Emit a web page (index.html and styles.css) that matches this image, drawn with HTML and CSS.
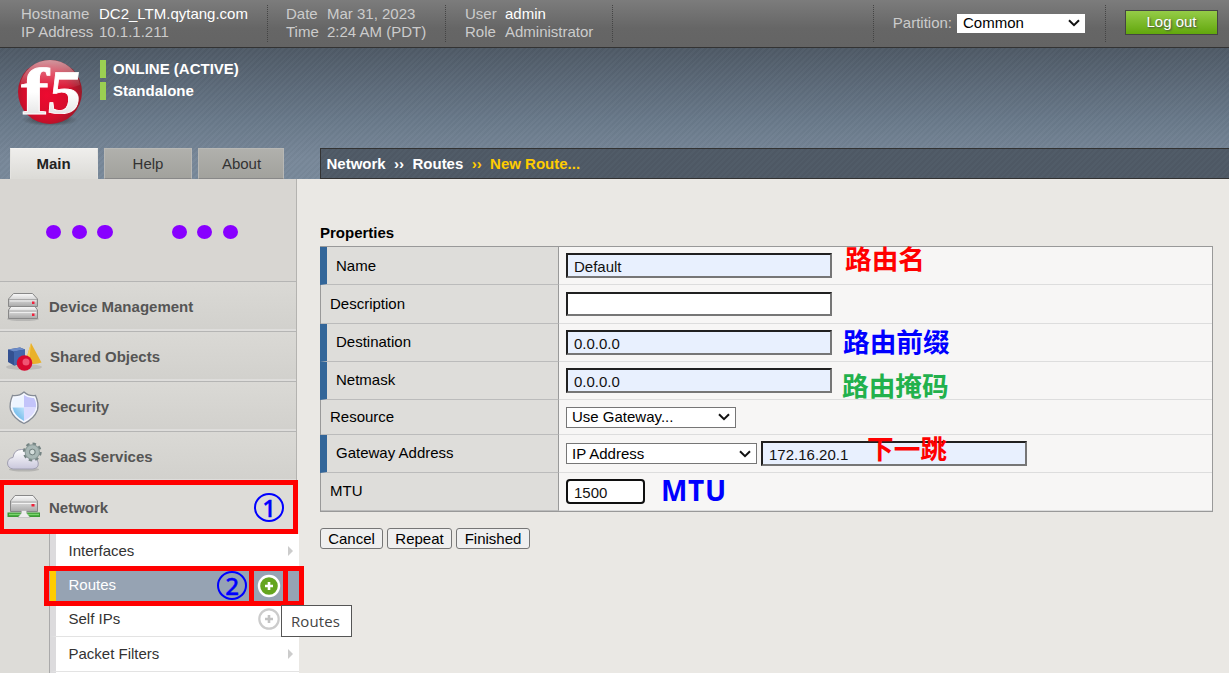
FILE: index.html
```html
<!DOCTYPE html>
<html lang="en">
<head>
<meta charset="utf-8">
<title>New Route</title>
<link rel="stylesheet" href="styles.css">
</head>
<body>
<div class="page">
  <header class="topbar">
    <dl class="info info-host"><dt>Hostname</dt><dd class="hi">DC2_LTM.qytang.com</dd><dt>IP Address</dt><dd>10.1.1.211</dd></dl>
    <dl class="info info-date"><dt>Date</dt><dd>Mar 31, 2023</dd><dt>Time</dt><dd>2:24 AM (PDT)</dd></dl>
    <dl class="info info-user"><dt>User</dt><dd class="hi">admin</dd><dt>Role</dt><dd>Administrator</dd></dl>
    <div class="partition"><span>Partition:</span>
      <div class="select select-common"><span>Common</span><svg viewBox="0 0 12 8"><path d="M1 1.2 6 6.2 11 1.2"/></svg></div>
    </div>
    <div class="logout-wrap"><button class="logout">Log out</button></div>
  </header>

  <section class="banner">
    <div class="brand">
      <svg class="logo" viewBox="0 0 72 72">
        <defs>
          <radialGradient id="ball" cx=".45" cy=".55" r=".6"><stop offset="0" stop-color="#ed0a30"/><stop offset=".6" stop-color="#d50d2b"/><stop offset="1" stop-color="#8a1b27"/></radialGradient>
          <linearGradient id="gloss" x2="0" y2="1"><stop offset="0" stop-color="#fff" stop-opacity=".55"/><stop offset="1" stop-color="#fff" stop-opacity="0"/></linearGradient>
          <linearGradient id="letter" x2="0" y2="1"><stop offset=".5" stop-color="#fff"/><stop offset="1" stop-color="#d8d8d8"/></linearGradient>
          <radialGradient id="shade"><stop offset="0" stop-color="#222" stop-opacity=".8"/><stop offset="1" stop-color="#222" stop-opacity="0"/></radialGradient>
        </defs>
        <ellipse cx="36" cy="62" rx="28" ry="6" fill="url(#shade)"/>
        <circle cx="36" cy="34" r="32" fill="url(#ball)"/>
        <path d="M6 27A30.500 30.500 0 0 1 66 27Q36 38 6 27z" fill="url(#gloss)"/>
        <text class="logo-f" x="7" y="56" textLength="28" lengthAdjust="spacingAndGlyphs">f</text>
        <text class="logo-5" transform="translate(32 55) skewX(-7)" x="0" y="0" textLength="33" lengthAdjust="spacingAndGlyphs">5</text>
      </svg>
      <div class="status"><p>ONLINE (ACTIVE)</p><p>Standalone</p></div>
    </div>
    <div class="navrow">
      <nav class="tabs"><a class="tab active">Main</a><a class="tab">Help</a><a class="tab about">About</a></nav>
      <div class="crumbs"><span>Network</span><span>››</span><span>Routes</span><span class="cur">››</span><span class="cur">New Route...</span></div>
    </div>
  </section>

  <div class="body">
    <aside class="side">
      <div class="blank">
        <div class="dots"><i></i><i></i><i></i></div>
        <div class="dots"><i></i><i></i><i></i></div>
      </div>
      <div class="item">
        <svg class="ico" viewBox="0 0 40 40">
          <defs><linearGradient id="metal" x2="0" y2="1"><stop offset="0" stop-color="#fafafa"/><stop offset="1" stop-color="#a9a9a9"/></linearGradient></defs>
          <ellipse cx="20" cy="33" rx="16" ry="2" fill="#999" opacity=".5"/>
          <path d="M5.500 24 8 20.500H32L34.500 24V32.500H5.500V24z" fill="url(#metal)" stroke="#888"/>
          <path d="M5.500 13 10.500 7.500H29.500L34.500 13V20.500H5.500z" fill="url(#metal)" stroke="#888"/>
          <path d="M6 13.500H34M6 25H34" stroke="#aaa"/><path d="M7 15H33M7 26.500H33" stroke="#eee"/>
          <rect x="29" y="15.500" width="2.500" height="2.500" fill="#f0203c"/><rect x="29" y="27.500" width="2.500" height="2.500" fill="#f0203c"/>
        </svg><span>Device Management</span></div>
      <div class="item">
        <svg class="ico" viewBox="0 0 40 40">
          <ellipse cx="21" cy="31" rx="18" ry="3" fill="#999" opacity=".4"/>
          <path d="M28 7 38.500 26.500Q33 29 22 27z" fill="#e9b12b"/><path d="M28 7 22 27 26 27z" fill="#f6cf59"/>
          <path d="M5 13.500 17 11.500 22 13.500V27L11 29.500 5 26z" fill="#345191"/><path d="M5 13.500 17 11.500 22 13.500 11 15.500z" fill="#6c8bc7"/><path d="M11 15.500 22 13.500V27L11 29.500z" fill="#4367ac"/>
          <circle cx="21.500" cy="27" r="7.800" fill="#d80a30"/><circle cx="23" cy="26" r="3.500" fill="#f05573"/>
        </svg><span class="n1">Shared Objects</span></div>
      <div class="item">
        <svg class="ico" viewBox="0 0 40 40">
          <defs><linearGradient id="aqua" x1="0" y1="1" x2="1" y2="0"><stop offset="0" stop-color="#4fa9e4"/><stop offset="1" stop-color="#bfe2fa"/></linearGradient></defs>
          <path d="M21 6Q16 10.500 9.500 9.500 6 18 7.500 24 11 33 21 37.500 31 33 34.500 24 36 17 32.500 9.500 26 10.500 21 6z" fill="#f5f8ff" stroke="#858b95" stroke-width="1.300"/>
          <path d="M21 9V21.500H9.500Q8.500 16 11 12 16.500 12.500 21 9z" fill="#edf4ff"/><path d="M21 9V21.500H33Q33.500 16 31 12 25.500 12.500 21 9z" fill="#c3c4fa"/>
          <path d="M9.500 21.500H21V35Q11.500 30 9.500 21.500z" fill="url(#aqua)"/><path d="M33 21.500H21V35Q31 30 33 21.500z" fill="#dcdcff"/>
        </svg><span class="n1">Security</span></div>
      <div class="item">
        <svg class="ico" viewBox="0 0 40 40">
          <defs><linearGradient id="cl" x2="0" y2="1"><stop offset="0" stop-color="#fff"/><stop offset="1" stop-color="#c9c7dc"/></linearGradient></defs>
          <ellipse cx="21" cy="33.500" rx="15" ry="2" fill="#888" opacity=".4"/>
          <path d="M10 33Q4.500 32 4.500 27 5 22 10 21.500 11 13.500 18.500 13.500 25 13.500 27 18 33 17.500 34 23 38 32 30 33z" fill="url(#cl)" stroke="#a09fb0"/>
          <circle cx="29.300" cy="16" r="8.200" fill="none" stroke="#748382" stroke-width="2.400" stroke-dasharray="3.440 3"/>
          <circle cx="29.300" cy="16" r="5.200" fill="none" stroke="#8a9a98" stroke-width="5"/><circle cx="29.300" cy="16" r="5" fill="none" stroke="#a9b8b6" stroke-width="3.400"/><circle cx="29.300" cy="16" r="2.800" fill="#d5dfdd" stroke="#748382"/>
        </svg><span class="n1">SaaS Services</span></div>
      <div class="item network">
        <svg class="ico" viewBox="0 0 40 40">
          <path d="M7.500 14 12 8.500H30L34.500 14V24.500H7.500z" fill="url(#metal)" stroke="#888"/><path d="M8 15H34.500" stroke="#aaa"/><path d="M9 16.500H33" stroke="#f2f2f2"/><rect x="28.500" y="17" width="3" height="2.500" fill="#ee1f37"/>
          <rect x="4.500" y="25.500" width="32.500" height="4.500" fill="#3b9b34"/><path d="M6 27.500H36" stroke="#79d66b" stroke-width="1.500"/><path d="M18.500 23.500H23.500V26L27 30.500H15L18.500 26z" fill="#eee" stroke="#aaa" stroke-width=".5"/>
        </svg><span>Network</span></div>
      <div class="submenu">
        <div class="sub first"><span>Interfaces</span><b class="arrow"></b></div>
        <div class="sub selected"><span>Routes</span>
          <svg class="plus" viewBox="0 0 24 24"><circle cx="12" cy="12" r="10" fill="#64a51e" stroke="#fff" stroke-width="2.400"/><path d="M12 8V16M8 12H16" stroke="#fff" stroke-width="2.600"/></svg></div>
        <div class="sub"><span>Self IPs</span>
          <svg class="plus" viewBox="0 0 24 24"><circle cx="12" cy="12" r="9.700" fill="#fff" stroke="#ccc" stroke-width="2.200"/><path d="M12 8V16M8 12H16" stroke="#c2c2c2" stroke-width="2.600"/></svg></div>
        <div class="sub"><span>Packet Filters</span><b class="arrow"></b></div>
        <div class="sub rest"></div>
      </div>
    </aside>

    <main class="content">
      <h1>Properties</h1>
      <div class="props">
        <div class="row r38"><label class="req">Name</label><div class="field"><input class="wide fill" value="Default"></div></div>
        <div class="row r39"><label>Description</label><div class="field"><input class="wide desc" value=""></div></div>
        <div class="row r38 up"><label class="req">Destination</label><div class="field"><input class="wide fill" value="0.0.0.0"></div></div>
        <div class="row r38 up"><label class="req">Netmask</label><div class="field"><input class="wide fill" value="0.0.0.0"></div></div>
        <div class="row r35"><label>Resource</label><div class="field"><div class="select s170"><span>Use Gateway...</span><svg viewBox="0 0 12 8"><path d="M1 1.2 6 6.2 11 1.2"/></svg></div></div></div>
        <div class="row r38 up"><label class="req">Gateway Address</label><div class="field"><div class="select s191"><span>IP Address</span><svg viewBox="0 0 12 8"><path d="M1 1.2 6 6.2 11 1.2"/></svg></div><input class="wide fill" value="172.16.20.1"></div></div>
        <div class="row r38 up"><label>MTU</label><div class="field"><input class="mtu" value="1500"></div></div>
      </div>
      <div class="actions"><button class="w63">Cancel</button><button class="w65">Repeat</button><button class="w74">Finished</button></div>
    </main>
  </div>

  <div class="box box-network"></div>
  <div class="box box-routes"></div>
  <div class="box box-plus"></div>
  <div class="num num-1">1</div>
  <div class="num num-2">2</div>
  <div class="tip">Routes</div>
  <div class="note note-name">路由名</div>
  <div class="note note-prefix">路由前缀</div>
  <div class="note note-mask">路由掩码</div>
  <div class="note note-hop">下一跳</div>
  <div class="note note-mtu">MTU</div>
</div>
</body>
</html>
```
FILE: styles.css
```css
* { box-sizing: border-box; }
body { margin: 0; font: 15px/18px "Liberation Sans", Arial, sans-serif; color: #000; }
.page { position: relative; width: 1229px; height: 673px; overflow: hidden; background: #eae8e4; }
p, dl, dd, h1 { margin: 0; }

/* top bar */
.topbar { display: flex; height: 48px; padding-top: 5px; color: #ccc; background: linear-gradient(#7c7c7c, #666 60%, #646464); border-bottom: 1px solid #333; }
.info { display: grid; align-content: start; height: 37px; white-space: nowrap; border-right: 1px dotted #444; }
.info-host { width: 268px; padding-left: 21px; grid-template-columns: 78px 1fr; }
.info-date { width: 178px; padding-left: 18px; grid-template-columns: 41px 1fr; }
.info-user { width: 167px; padding-left: 19px; grid-template-columns: 40px 1fr; }
.hi { color: #fff; }
.partition { display: flex; align-items: center; gap: 5px; height: 37px; margin-left: auto; padding: 0 20px 1px 19px; border-left: 1px dotted #444; border-right: 1px dotted #444; }
.logout-wrap { width: 123px; padding: 5px 0 0 19px; }
.logout { width: 93px; height: 25px; padding: 0 0 2px; font: inherit; color: #fff; text-shadow: 1px 1px 2px #444; background: linear-gradient(#95cc47, #62a70d); border: 1px solid #444; }

.select { display: flex; align-items: center; justify-content: space-between; height: 21px; padding: 0 5px 0 5px; color: #000; background: #fff; border: 1px solid #767676; }
.select svg { width: 12px; height: 8px; fill: none; stroke: #111; stroke-width: 2; }
.select-common { width: 128px; height: 19px; border: 0; padding-left: 6px; }
.s170 { width: 170px; }
.s191 { width: 191px; }

/* banner */
.banner { display: flex; flex-direction: column; justify-content: space-between; height: 131px;
  background: repeating-linear-gradient(135deg, rgba(255,255,255,.02) 0 2px, rgba(0,0,0,.02) 2px 4px), linear-gradient(#4f5a66, #69798a 55%, #788899 85%, #78899a); }
.brand { display: flex; height: 80px; padding-left: 14px; }
.logo { width: 72px; height: 72px; margin-top: 10px; overflow: visible; }
.logo text { font-family: "Liberation Serif", serif; font-weight: bold; fill: url(#letter); stroke: #fff; stroke-width: .8px; }
.logo-f { font-size: 65px; }
.logo-5 { font-size: 62px; }
.status { padding: 12px 0 0 14px; color: #fff; font-weight: bold; }
.status p { height: 18px; margin-bottom: 4px; padding-left: 7px; border-left: 6px solid #9bcf52; }
.navrow { display: flex; height: 31px; }
.tabs { display: flex; gap: 6px; width: 320px; padding-left: 10px; }
.tab { width: 88px; text-align: center; color: #333; background: linear-gradient(#b0b0ac, #a2a29d); border: 1px solid #b8b8b5; border-bottom-color: #888; line-height: 29px; }
.tab.about { width: 86px; padding-left: 1px; }
.tab.active { padding-right: 1px; font-weight: bold; color: #222; background: linear-gradient(#efeeec, #dcdbd7); border-color: #f3f2f0 #e4e3e0 #dcdbd7; }
.crumbs { flex: 1; display: flex; gap: 8.400px; padding-left: 5.500px; line-height: 29px; font-weight: bold; color: #fff; background: repeating-linear-gradient(135deg, #515c68 0 2px, #4e5864 2px 4px); border: solid #333; border-width: 1px 0 1px 1px; }
.cur { color: #fc0; }

/* sidebar */
.body { display: flex; height: 494px; }
.side { width: 297px; background: #dddcd8; border-right: 1px solid #b4b3b0; }
.blank { display: flex; gap: 59px; height: 102px; padding: 46px 0 0 46px; background: #d8d6d2; }
.dots { display: flex; gap: 10.500px; }
.dots i { width: 15.200px; height: 14px; border-radius: 50%; background: #80f; }
.item { display: flex; align-items: center; height: 50px; padding-left: 3px; font-weight: bold; color: #555; background: linear-gradient(#dad9d5, #d2d1cd); border-top: 1px solid #b5b5b4; border-bottom: 2px solid #dedddb; }
.item span { padding: 3px 0 0 6px; }
.item .n1 { padding-left: 7px; }
.ico { width: 40px; height: 40px; flex: none; overflow: visible; }
.item.network { height: 53px; background: #dddcd8; border-color: #dddcd8; }
.item.network span { padding-top: 1px; }
.submenu { width: 250px; height: 139px; margin-left: 49px; position: relative; overflow: hidden; border-left: 1px solid #aaa; background: #fff; }
.sub { display: flex; align-items: center; justify-content: space-between; height: 35px; padding: 0 6px 0 12.500px; color: #333; border-left: 6px solid #dcdbdd; border-bottom: 1px solid #e3e3e3; }
.sub.first { height: 36px; padding-bottom: 2px; border-bottom: 0; }
.sub.selected { height: 32px; padding-bottom: 2px; color: #fff; background: #96a3b3; border-left-color: #fc0; border-bottom: 0; }
.sub.selected .plus { margin-top: 1px; }
.sub.rest { border-bottom: 0; }
.plus { width: 24px; height: 24px; margin-right: 12px; }
.arrow { border: 5px solid transparent; border-left-color: #ccc; border-right-width: 0; }

/* form */
.content { flex: 1; padding: 45px 16px 0 23px; }
h1 { font-size: 15px; line-height: 18px; margin-bottom: 4px; }
.props { width: 893px; border: 1px solid #999; background: #f7f6f5; }
.row { display: flex; }
.r38 { height: 38px; }
.r39 { height: 39px; }
.r35 { height: 35px; }
.row label { display: flex; align-items: center; width: 238px; padding-left: 9px; background: #dedddA; border-right: 1px solid #999; border-bottom: 1px solid #bbb; }
.row label.req { width: 239px; margin-left: -1px; padding-left: 9px; border-left: 7px solid #369; }
.row.up label { padding-bottom: 2px; }
.field { display: flex; flex: 1; align-items: center; gap: 4px; padding-left: 7px; border-bottom: 1px solid #ddd; }
input { font: inherit; color: #111; background: #fff; border: 2px solid; border-color: #202020 #767676 #767676 #202020; border-radius: 0; padding: 2px 6px 0; height: 25px; outline: 0; }
.wide { width: 266px; }
.fill { background: #e8f0fe; }
.desc { height: 24px; }
.mtu { width: 79px; border: 2px solid #101010; border-radius: 4px; }
.actions { display: flex; gap: 4px; margin-top: 16px; }
.actions button { height: 21px; padding: 0; font: inherit; color: #000; background: #efefef; border: 1px solid #767676; border-radius: 3px; }
.w63 { width: 63px; }
.w65 { width: 65px; }
.w74 { width: 74px; }

/* overlays */
.box { position: absolute; border: 5px solid #f00; }
.box-network { left: -1px; top: 480px; width: 299px; height: 54px; }
.box-routes { left: 44px; top: 566px; width: 260px; height: 40px; }
.box-plus { left: 249px; top: 566px; width: 39px; height: 40px; }
.num { position: absolute; width: 30px; height: 29px; border: 2.500px solid #00f; border-radius: 50%; text-align: center; font: 500 24px/25px "Noto Sans", sans-serif; color: #00f; -webkit-text-stroke: .4px #00f; }
.num-1 { left: 254px; top: 493px; }
.num-2 { left: 217px; top: 571px; }
.tip { position: absolute; left: 281px; top: 605px; width: 71px; height: 32px; padding-left: 9px; font: 15px/30px "Open Sans", sans-serif; letter-spacing: .1px; color: #444; background: #fff; border: 1px solid #555; }
.note { position: absolute; font: bold 26.700px/30px "Noto Sans CJK SC", sans-serif; white-space: nowrap; color: #f00; }
.note-name { left: 845px; top: 243px; }
.note-prefix { left: 843px; top: 326px; color: #00f; }
.note-mask { left: 842px; top: 370px; color: #22b14c; }
.note-hop { left: 867px; top: 433px; }
.note-mtu { left: 661px; top: 475px; color: #00f; font-family: "Noto Sans", sans-serif; font-size: 28px; letter-spacing: .7px; }
```
